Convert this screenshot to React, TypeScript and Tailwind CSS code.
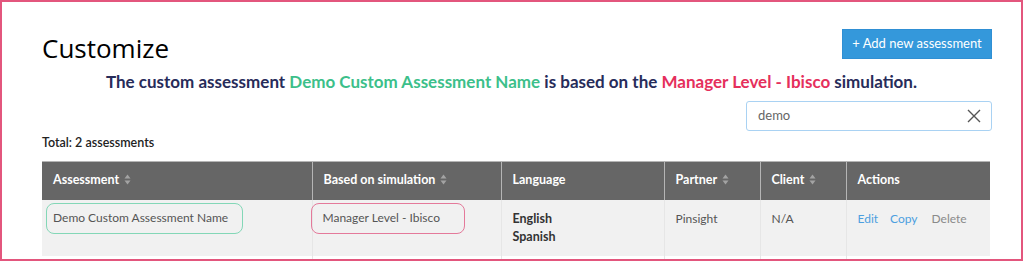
import React from "react";

function SortIcon() {
  return (
    <svg width="7" height="11" viewBox="0 0 7 11" className="ml-[5px] inline-block align-[-1px]">
      <path d="M3.5 0.5 L6.5 4.5 L0.5 4.5 Z" fill="#a3a3a3" />
      <path d="M3.5 10.5 L6.5 6.5 L0.5 6.5 Z" fill="#a3a3a3" />
    </svg>
  );
}

const cols = [
  { label: "Assessment", w: "w-[270px]", sort: true },
  { label: "Based on simulation", w: "w-[189px]", sort: true },
  { label: "Language", w: "w-[163px]", sort: false },
  { label: "Partner", w: "w-[96px]", sort: true },
  { label: "Client", w: "w-[86px]", sort: true },
  { label: "Actions", w: "w-[144px]", sort: false },
];

const lato = { fontFamily: "Lato, sans-serif" };

export default function App() {
  return (
    <div
      className="h-[262px] w-[1024px] overflow-hidden bg-white"
      style={{ fontFamily: '"Open Sans", "Noto Sans", sans-serif' }}
    >
      <div className="h-[261px] w-[1023px] overflow-hidden border-2 border-[#e3567d]">
        <div className="flex items-start justify-between pl-[40px] pr-[29px] pt-[27px]">
          <h1 className="mt-[2px] text-[26px] leading-[34px] text-black">Customize</h1>
          <button
            type="button"
            style={lato}
            className="h-[30px] w-[150px] whitespace-nowrap border border-[#2f8fd4] bg-[#3498db] text-[13px] text-white"
          >
            + Add new assessment
          </button>
        </div>

        <p className="mt-[6px] text-center text-[17px] font-bold leading-[22px] text-[#272c5a]" style={lato}>
          The custom assessment <span className="text-[#3cbf8a]">Demo Custom Assessment Name</span> is based on the{" "}
          <span className="text-[#e52f5c]">Manager Level - Ibisco</span> simulation.
        </p>

        <div className="mt-[8px] flex justify-end pr-[29px]">
          <div className="flex h-[30px] w-[246px] items-center justify-between rounded-[3px] border border-[#a9d2f3] pl-[11px] pr-[10px]">
            <span className="text-[13px] text-[#666]" style={lato}>demo</span>
            <svg width="14" height="14" viewBox="0 0 14 14">
              <path d="M1 1 L13 13 M13 1 L1 13" stroke="#555" strokeWidth="1.4" />
            </svg>
          </div>
        </div>

        <div className="ml-[40px] mt-[4px] text-[12.5px] font-semibold leading-[16px] text-[#222]" style={lato}>
          Total: 2 assessments
        </div>

        <table className="ml-[40px] mt-[10px] w-[948px] table-fixed border-collapse text-[12px]" style={lato}>
          <thead>
            <tr className="h-[38px] bg-[#666666] text-left text-[12.5px] text-white">
              {cols.map((c, i) => (
                <th
                  key={c.label}
                  className={`${c.w} border-t border-[#b5b5b5] px-[11px] font-bold ${i > 0 ? "border-l" : ""}`}
                >
                  {c.label}
                  {c.sort && <SortIcon />}
                </th>
              ))}
            </tr>
          </thead>
          <tbody>
            <tr className="h-[56px] bg-[#f1f1f1] align-top leading-[18px] text-[#555]">
              <td className="px-[11px] pt-[3px]">
                <span className="-ml-[7px] inline-block rounded-[8px] border-[1.5px] border-[#83d7b7] py-[5.5px] pl-[6px] pr-[14px]">
                  Demo Custom Assessment Name
                </span>
              </td>
              <td className="border-l border-[#e6e6e6] px-[11px] pt-[3px]">
                <span className="-ml-[13px] inline-block rounded-[8px] border-[1.5px] border-[#e4799a] py-[5.5px] pl-[11px] pr-[24px]">
                  Manager Level - Ibisco
                </span>
              </td>
              <td className="border-l border-[#e6e6e6] px-[11px] pt-[10px] text-[12.5px] font-bold text-[#333]">
                English
                <br />
                Spanish
              </td>
              <td className="border-l border-[#e6e6e6] px-[11px] pt-[10px]">Pinsight</td>
              <td className="border-l border-[#e6e6e6] px-[11px] pt-[10px]">N/A</td>
              <td className="border-l border-[#e6e6e6] px-[11px] pt-[10px]">
                <span className="text-[#4c9fe0]">Edit</span>
                <span className="ml-[12px] text-[#4c9fe0]">Copy</span>
                <span className="ml-[14px] text-[#8a8a8a]">Delete</span>
              </td>
            </tr>
            <tr className="h-[20px] bg-white">
              {cols.map((c, i) => (
                <td key={c.label} className={i > 0 ? "border-l border-[#e6e6e6]" : ""} />
              ))}
            </tr>
          </tbody>
        </table>
      </div>
    </div>
  );
}
